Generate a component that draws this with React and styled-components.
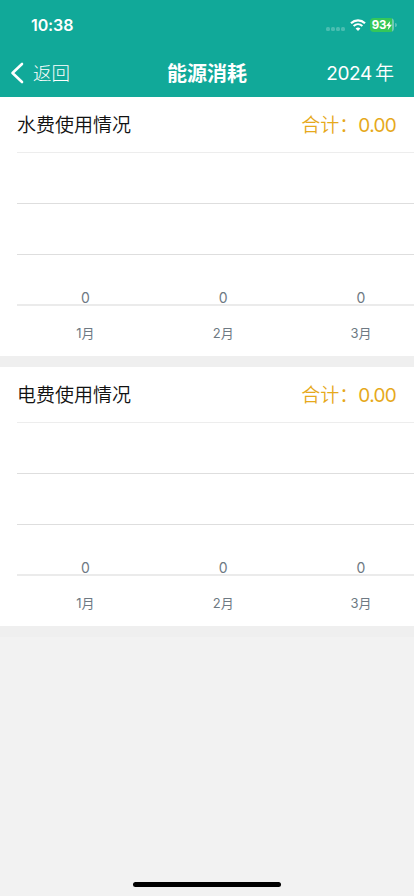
import React from 'react';
import styled, { createGlobalStyle } from 'styled-components';

const GlobalStyle = createGlobalStyle`
  * {
    box-sizing: border-box;
  }
  body {
    margin: 0;
    background-color: #f2f2f2;
    font-family: Inter, 'Noto Sans CJK SC', sans-serif;
  }
`;

const months = [
  { label: '1月', value: 0 },
  { label: '2月', value: 0 },
  { label: '3月', value: 0 },
];

const Screen = styled.div`
  width: 414px;
  height: 896px;
  display: flex;
  flex-direction: column;
  overflow: hidden;
  background-color: #f2f2f2;
`;

const Header = styled.header`
  height: 97px;
  flex-shrink: 0;
  color: white;
  background-color: #11a999;
`;

const StatusBar = styled.div`
  height: 50px;
  display: flex;
  justify-content: space-between;
  align-items: center;
  padding: 0 17px 0 31px;
`;

const Time = styled.span`
  font-size: 16px;
  font-weight: 600;
  line-height: 20px;
  letter-spacing: -0.1px;
`;

const StatusIcons = styled.div`
  display: flex;
  align-items: center;
`;

const Signal = styled.div`
  display: flex;
  gap: 1px;
  margin: 8px 5px 0 0;
`;

const Dot = styled.i`
  width: 4px;
  height: 4px;
  border-radius: 1.5px;
  background-color: rgba(255, 255, 255, 0.24);
`;

const Battery = styled.div`
  width: 24px;
  height: 14px;
  margin-left: 4px;
  display: flex;
  align-items: center;
  justify-content: center;
  border-radius: 4px;
  font-size: 11.5px;
  font-weight: 700;
  letter-spacing: -0.2px;
  background: linear-gradient(to right, #34c759 93%, #70cbb2 93%);
`;

const BatteryCap = styled.i`
  width: 2px;
  height: 4px;
  margin-left: 1px;
  border-radius: 0 2px 2px 0;
  background-color: rgba(255, 255, 255, 0.3);
`;

const NavBar = styled.nav`
  height: 47px;
  display: grid;
  grid-template-columns: 1fr auto 1fr;
  align-items: center;
  padding: 0 20px 1px 10px;
`;

const Back = styled.div`
  display: flex;
  align-items: center;
  gap: 9px;
  font-size: 18.5px;
  line-height: 28px;
  font-weight: 300;
`;

const Title = styled.h1`
  margin: 0;
  font-size: 20px;
  line-height: 28px;
  font-weight: 700;
  padding: 2px 0 0 10px;
`;

const Year = styled.div`
  display: flex;
  justify-content: flex-end;
  gap: 3px;
  padding-top: 1px;
  font-size: 19px;
  line-height: 28px;
  font-weight: 350;
  letter-spacing: -0.1px;
`;

const Digits = styled.span`
  font-weight: 400;
  letter-spacing: -0.3px;
`;

const Card = styled.section`
  height: 270px;
  flex-shrink: 0;
  background-color: white;
  border-bottom: 11px solid #efefef;
`;

const CardHead = styled.div`
  height: 56px;
  margin-left: 17px;
  padding: 3px 17px 0 0;
  display: flex;
  justify-content: space-between;
  align-items: center;
  border-bottom: 1px solid #ededed;
  font-size: 19px;
  line-height: 28px;
  font-weight: 350;
  color: #111;
`;

const Total = styled.div`
  display: flex;
  color: #e6a91c;
`;

const Amount = styled.span`
  font-weight: 400;
  letter-spacing: -0.7px;
  padding-right: 1px;
`;

const Chart = styled.div`
  margin-left: 17px;
  overflow: hidden;
`;

const GridRow = styled.div`
  height: 51px;
  display: flex;
  align-items: flex-end;
  border-bottom: ${(props) => (props.$last ? '2px solid #ebebeb' : '1px solid #dedede')};
`;

const Labels = styled.div`
  height: 54px;
  display: flex;
  align-items: center;
`;

const Cell = styled.span`
  flex: 0 0 137.8px;
  padding-right: 1px;
  text-align: center;
  font-size: ${(props) => (props.$value ? 14 : 13)}px;
  line-height: ${(props) => (props.$value ? 12 : 18)}px;
  color: #6e7983;
`;

const HomeBar = styled.div`
  width: 148px;
  height: 5px;
  margin: auto auto 9px;
  border-radius: 3px;
  background-color: black;
`;

const UsageCard = ({ title, total }) => {
  return (
    <Card>
      <CardHead>
        <span>{title}</span>
        <Total>
          <span>合计：</span>
          <Amount>{total}</Amount>
        </Total>
      </CardHead>
      <Chart>
        <GridRow />
        <GridRow />
        <GridRow $last>
          {months.map((month) => (
            <Cell key={month.label} $value>
              {month.value}
            </Cell>
          ))}
        </GridRow>
        <Labels>
          {months.map((month) => (
            <Cell key={month.label}>{month.label}</Cell>
          ))}
        </Labels>
      </Chart>
    </Card>
  );
};

const App = () => {
  return (
    <Screen>
      <GlobalStyle />
      <Header>
        <StatusBar>
          <Time>10:38</Time>
          <StatusIcons>
            <Signal>
              <Dot />
              <Dot />
              <Dot />
              <Dot />
            </Signal>
            <svg width="16" height="12" viewBox="0 0 16 12" fill="none">
              <path d="M1 4.3C5 .5 11 .5 15 4.3" stroke="white" strokeWidth="2.2" />
              <path d="M3.6 7C6.2 4.7 9.8 4.7 12.4 7" stroke="white" strokeWidth="2" />
              <path d="M8 12L5.6 9.5C7 8.3 9 8.3 10.4 9.5Z" fill="white" />
            </svg>
            <Battery>
              93
              <svg width="6" height="9" viewBox="0 0 6 9">
                <path d="M4.2 0L0 5H2.6L1.8 9L6 3.8H3.4Z" fill="white" />
              </svg>
            </Battery>
            <BatteryCap />
          </StatusIcons>
        </StatusBar>
        <NavBar>
          <Back>
            <svg width="14" height="22" viewBox="0 0 14 22" fill="none">
              <path
                d="M12 2L2.5 11L12 20"
                stroke="white"
                strokeWidth="2.6"
                strokeLinecap="round"
                strokeLinejoin="round"
              />
            </svg>
            <span>返回</span>
          </Back>
          <Title>能源消耗</Title>
          <Year>
            <Digits>2024</Digits>
            <span>年</span>
          </Year>
        </NavBar>
      </Header>
      <UsageCard title="水费使用情况" total="0.00" />
      <UsageCard title="电费使用情况" total="0.00" />
      <HomeBar />
    </Screen>
  );
};

export default App;
